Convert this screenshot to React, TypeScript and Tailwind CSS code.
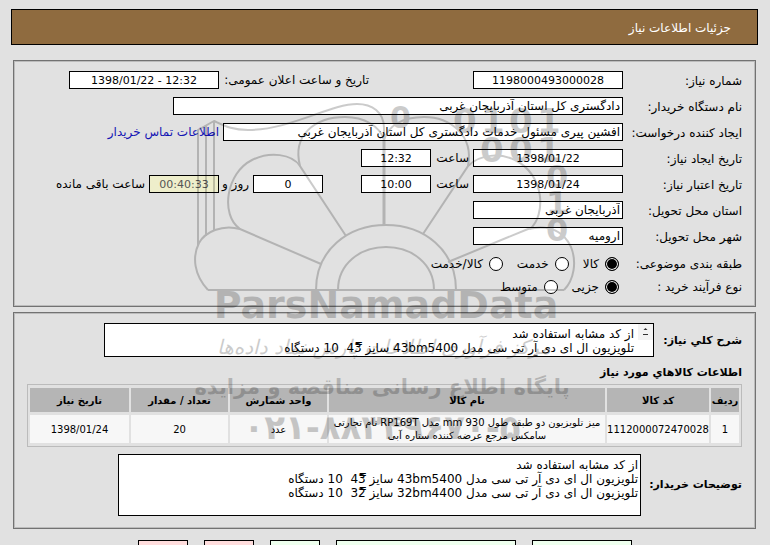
import type { ReactNode } from "react";

const notes =
  "از کد مشابه استفاده شد\nتلویزیون ال ای دی آر تی سی مدل 43bm5400 سایز 43\u033f  10 دستگاه\nتلویزیون ال ای دی آر تی سی مدل 32bm4400 سایز 32\u033f  10 دستگاه";

interface FieldRowProps {
  label: string;
  htmlFor?: string;
  children: ReactNode;
}

function FieldRow({ label, htmlFor, children }: FieldRowProps) {
  return (
    <div className="flex h-[18px] items-center">
      <label htmlFor={htmlFor} className="w-[119px] shrink-0 pt-0.5 whitespace-nowrap">
        {label}
      </label>
      <div className="flex grow items-center gap-1">{children}</div>
    </div>
  );
}

interface RadioRowProps {
  name: string;
  label: string;
  options: string[];
}

function RadioRow({ name, label, options }: RadioRowProps) {
  return (
    <fieldset className="flex h-[18px] items-center">
      <legend className="float-right w-[119px] whitespace-nowrap">{label}</legend>
      <div className="flex items-center gap-2.5">
        {options.map((option, i) => (
          <label key={option} className="flex items-center gap-0.5 whitespace-nowrap">
            <input
              type="radio"
              name={name}
              defaultChecked={i === 0}
              className="m-1 size-[14px] appearance-none rounded-full border border-black bg-white checked:bg-black checked:shadow-[inset_0_0_0_1px_white]"
            />
            {option}
          </label>
        ))}
      </div>
    </fieldset>
  );
}

interface BoxProps {
  id: string;
  value: string;
  className: string;
}

function TextBox({ id, value, className }: BoxProps) {
  return (
    <input
      id={id}
      readOnly
      defaultValue={value}
      className={`h-[18px] border border-black bg-white px-0.5 text-[12px] leading-4 ${className}`}
    />
  );
}

function NumberBox({ id, value, className }: BoxProps) {
  return (
    <input
      id={id}
      dir="ltr"
      readOnly
      defaultValue={value}
      className={`h-[18px] border border-black px-0.5 text-center text-[11px] leading-4 ${className}`}
    />
  );
}

const columns = [
  { title: "ردیف", value: "1", width: "w-[28px]" },
  { title: "کد کالا", value: "1112000072470028", width: "w-[102px]" },
  {
    title: "نام کالا",
    value: "میز تلویزیون دو طبقه طول 930 mm مدل RP169T نام تجارتی سامکس مرجع عرضه کننده ستاره آبی",
    width: "",
  },
  { title: "واحد شمارش", value: "عدد", width: "w-[97px]" },
  { title: "تعداد / مقدار", value: "20", width: "w-[97px]" },
  { title: "تاریخ نیاز", value: "1398/01/24", width: "w-[99px]" },
];

const actions = [
  { name: "پاسخ به نیاز", style: "w-[100px] bg-[#eeffee]" },
  { name: "مشاهده اسناد", style: "w-[180px] bg-[#eeffee]" },
  { name: "چاپ", style: "w-[50px] bg-[#eeffee]" },
  { name: "بازگشت", style: "w-[50px] bg-[#ffdddd]" },
  { name: "خروج", style: "w-[50px] bg-[#ffdddd]" },
];

const panel =
  "mr-[14px] ml-[13px] flex flex-col border border-[#727272] px-[13px] shadow-[inset_0_0_0_1px_#bcbcbc]";

function Watermark() {
  return (
    <svg
      aria-hidden="true"
      width="400"
      height="360"
      viewBox="185 95 400 360"
      className="pointer-events-none absolute inset-x-0 top-[95px] mx-auto font-['DejaVu_Sans',sans-serif] opacity-20 [direction:ltr]"
    >
      {/* Half flower */}
      <g fill="none" stroke="black" strokeWidth="2">
        <path d="M208 290H564" />
        <path d="M316 290C316 250 348 225 386 225S456 250 456 290" />
        <path d="M338 290C338 264 360 247 386 247S434 264 434 290" />
        <path strokeWidth="3" d="M384 225V140" />
        <path d="M384 140V128C384 112 372 104 357 104C330 104 290 130 248 130C232 130 225 126 214 121L198 130V246M206 126V236M214 121V231" />
        <path d="M346 236L300 166C292 135 315 117 345 117C364 117 380 126 384 140" />
        <path d="M423 234L468 166C474 135 450 117 424 117C402 117 388 126 384 140" />
        <path d="M300 166C292 154 270 151 252 160C226 173 220 215 240 229" />
        <path d="M468 166C480 154 500 153 515 160C545 175 546 215 530 229" />
        <path d="M321 264L240 229C222 224 205 232 199 243C192 257 194 275 208 290" />
        <path d="M448 262L528 229C550 224 564 232 571 247C577 262 574 280 564 290" />
      </g>
      <g fontWeight="bold">
        <text x="390" y="128" fontSize="30">0</text>
        <text x="453 481 509 537" y="133" fontSize="34">0101</text>
        <text x="480 509 537" y="162" fontSize="34">001</text>
        <text x="546" y="188" fontSize="32">0</text>
        <text x="546" y="214" fontSize="32">1</text>
        <text x="546" y="241" fontSize="32">0</text>
        <text x="386" y="318" fontSize="38" textAnchor="middle">ParsNamadData</text>
      </g>
      <g direction="rtl" textAnchor="middle">
        <text x="384" y="354" fontSize="20" fontStyle="italic" className="[direction:rtl]">مرکز فرآوری اطلاعات پارس نماد داده‌ها</text>
        <text x="382" y="394" fontSize="21" fontWeight="bold" className="[direction:rtl]">پایگاه اطلاع رسانی مناقصه و مزایده</text>
      </g>
      <text x="382" y="439" fontSize="34" textAnchor="middle" fontWeight="bold" className="[unicode-bidi:bidi-override]">
        ۰۲۱-۸۸۳۴۹۶۷۰-۵
      </text>
    </svg>
  );
}

export default function App() {
  return (
    <div
      dir="rtl"
      className="relative min-h-screen bg-[#e1e1e1] pt-[9px] font-['DejaVu_Sans',sans-serif] text-[12px] text-black"
    >
      <header className="mr-3 ml-[11px] flex h-9 items-center border border-black bg-[#8f6b3f] px-[26px] pt-0.5 text-white">
        <h1>جزئیات اطلاعات نیاز</h1>
      </header>

      <section className={`mt-[15px] gap-2 pt-[10px] pb-3 ${panel}`}>
        <FieldRow label="شماره نیاز:" htmlFor="number">
          <NumberBox id="number" value="1198000493000028" className="w-[150px] bg-white" />
          <label htmlFor="announced" className="mr-[100px] w-[146px] whitespace-nowrap">
            تاریخ و ساعت اعلان عمومی:
          </label>
          <NumberBox id="announced" value="1398/01/22 - 12:32" className="w-[150px] bg-white" />
        </FieldRow>
        <FieldRow label="نام دستگاه خریدار:" htmlFor="buyer">
          <TextBox id="buyer" value="دادگستری کل استان آذربایجان غربی" className="w-[450px]" />
        </FieldRow>
        <FieldRow label="ایجاد کننده درخواست:" htmlFor="creator">
          <TextBox
            id="creator"
            value="افشین پیری مسئول خدمات دادگستری کل استان آذربایجان غربی"
            className="w-[400px]"
          />
          <a href="#" className="whitespace-nowrap text-[#1414b4]">
            اطلاعات تماس خریدار
          </a>
        </FieldRow>
        <FieldRow label="تاریخ ایجاد نیاز:" htmlFor="created">
          <NumberBox id="created" value="1398/01/22" className="w-[150px] bg-white" />
          <label htmlFor="createdTime" className="w-[34px]">ساعت</label>
          <NumberBox id="createdTime" value="12:32" className="w-[70px] bg-white" />
        </FieldRow>
        <FieldRow label="تاریخ اعتبار نیاز:" htmlFor="expires">
          <NumberBox id="expires" value="1398/01/24" className="w-[150px] bg-white" />
          <label htmlFor="expiresTime" className="w-[34px]">ساعت</label>
          <NumberBox id="expiresTime" value="10:00" className="w-[70px] bg-white" />
          <NumberBox id="days" value="0" className="mr-[34px] w-[70px] bg-white" />
          <label htmlFor="days" className="w-[26px] whitespace-nowrap">روز و</label>
          <NumberBox id="remaining" value="00:40:33" className="w-[70px] bg-[#eeeecb] text-[#555]" />
          <label htmlFor="remaining" className="whitespace-nowrap">ساعت باقی مانده</label>
        </FieldRow>
        <FieldRow label="استان محل تحویل:" htmlFor="province">
          <TextBox id="province" value="آذربایجان غربی" className="w-[150px]" />
        </FieldRow>
        <FieldRow label="شهر محل تحویل:" htmlFor="city">
          <TextBox id="city" value="ارومیه" className="w-[150px]" />
        </FieldRow>
        <div className="flex flex-col gap-[5px]">
          <RadioRow name="category" label="طبقه بندی موضوعی:" options={["کالا", "خدمت", "کالا/خدمت"]} />
          <RadioRow name="process" label="نوع فرآیند خرید :" options={["جزیی", "متوسط"]} />
        </div>
      </section>

      <section className={`mt-[5px] pt-[10px] pb-3 ${panel}`}>
        <div className="flex items-center">
          <label htmlFor="summary" className="w-[88px] pt-0.5 text-[11px] font-bold whitespace-nowrap">
            شرح کلي نیاز:
          </label>
          <div className="flex h-[34px] w-[550px] border border-black bg-white">
            <span className="flex h-4 w-[15px] items-center justify-center bg-[#f3f3f3]">
              <svg width="5" height="8" viewBox="0 0 5 8" fill="#333">
                <path d="M2.5 0L4.5 2H.5ZM0 6H5V7H0Z" />
              </svg>
            </span>
            <textarea
              id="summary"
              readOnly
              defaultValue={notes}
              className="grow resize-none overflow-hidden pt-[3px] pr-1 text-[12px] leading-[14px]"
            />
          </div>
        </div>
        <h2 className="mt-[7px] text-[11px] leading-[18px] font-bold">اطلاعات کالاهاي مورد نیاز</h2>
        <table className="mt-0.5 w-full table-fixed border-separate border-spacing-x-0.5 border-spacing-y-[3px] border border-[#bbb] text-[10px]">
          <thead>
            <tr className="h-6 bg-[#b5b5b5]">
              {columns.map((c) => (
                <th key={c.title} className={`p-0 whitespace-nowrap ${c.width}`}>{c.title}</th>
              ))}
            </tr>
          </thead>
          <tbody>
            <tr className="h-7 bg-[#f7f7f7] text-center leading-[13px]">
              {columns.map((c) => (
                <td key={c.title} className="p-0">{c.value}</td>
              ))}
            </tr>
          </tbody>
        </table>
        <div className="mt-[7px] flex items-center">
          <label htmlFor="notes" className="w-[101px] text-[11px] font-bold whitespace-nowrap">
            توضیحات خریدار:
          </label>
          <textarea
            id="notes"
            readOnly
            defaultValue={notes}
            className="h-[62px] w-[523px] resize-none overflow-hidden border border-black bg-white px-0.5 pt-[3px] text-[12px] leading-[14px]"
          />
        </div>
      </section>

      <div className="mt-[11px] flex justify-center gap-4">
        {actions.map((a) => (
          <button key={a.name} type="button" aria-label={a.name} className={`h-6 border border-black ${a.style}`} />
        ))}
      </div>

      <Watermark />
    </div>
  );
}
